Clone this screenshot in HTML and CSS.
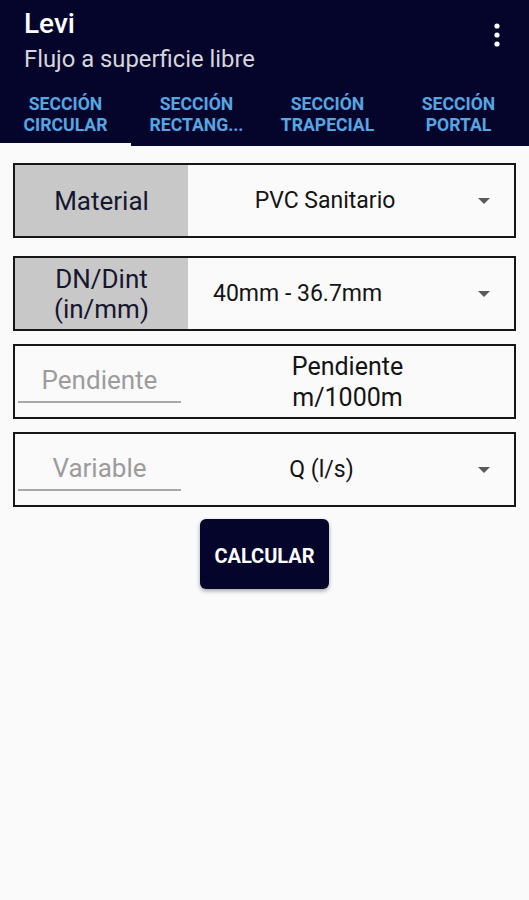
FILE: index.html
```html
<!DOCTYPE html>
<html lang="es">
<head>
  <meta charset="UTF-8" />
  <meta name="viewport" content="width=device-width, initial-scale=1.0"/>
  <title>Levi - Flujo a superficie libre</title>
  <link rel="stylesheet" href="styles.css">
</head>
<body>

  <header class="appbar">
    <div class="toolbar">
      <div class="titles">
        <h1>Levi</h1>
        <p>Flujo a superficie libre</p>
      </div>
      <div class="menu">
        <svg width="10" height="28" viewBox="0 0 10 28">
          <circle cx="5" cy="4" r="2.6" fill="#fff"/>
          <circle cx="5" cy="13" r="2.6" fill="#fff"/>
          <circle cx="5" cy="22" r="2.6" fill="#fff"/>
        </svg>
      </div>
    </div>
    <nav class="tabs">
      <a class="tab active">SECCIÓN<br>CIRCULAR</a>
      <a class="tab">SECCIÓN<br>RECTANG...</a>
      <a class="tab">SECCIÓN<br>TRAPECIAL</a>
      <a class="tab">SECCIÓN<br>PORTAL</a>
    </nav>
  </header>

  <div class="main">
    <div class="row first">
      <div class="label">Material</div>
      <div class="spinner">
        <span class="value">PVC Sanitario</span>
        <span class="arrow"></span>
      </div>
    </div>

    <div class="row second">
      <div class="label">DN/Dint<br>(in/mm)</div>
      <div class="spinner left">
        <span class="value">40mm - 36.7mm</span>
        <span class="arrow"></span>
      </div>
    </div>

    <div class="row">
      <div class="field"><span>Pendiente</span></div>
      <div class="unit">Pendiente<br>m/1000m</div>
    </div>

    <div class="row">
      <div class="field"><span>Variable</span></div>
      <div class="spinner">
        <span class="value">Q (l/s)</span>
        <span class="arrow"></span>
      </div>
    </div>

    <button class="calc">CALCULAR</button>
  </div>

</body>
</html>
```

FILE: styles.css
```css
* {
  margin: 0;
  padding: 0;
  box-sizing: border-box;
  font-family: Roboto, "Liberation Sans", sans-serif;
}

body {
  background: #fafafa;
  min-height: 100vh;
}

.appbar {
  background: #05052c;
  color: white;
}

.toolbar {
  height: 86px;
  display: flex;
  justify-content: space-between;
  padding: 8px 0 0 24px;
}

.titles h1 {
  font-size: 28px;
  font-weight: 500;
  line-height: 32px;
}

.titles p {
  font-size: 23.8px;
  line-height: 30px;
  margin-top: 4px;
  color: #d6d6dc;
}

.menu {
  padding: 14px 27px 0 0;
}

.tabs {
  display: flex;
  height: 60px;
  width: 524px;
  padding-bottom: 3px;
}

.tab {
  flex: 1;
  display: flex;
  align-items: center;
  justify-content: center;
  text-align: center;
  font-size: 17.6px;
  font-weight: 700;
  line-height: 21px;
  color: #56a6e2;
  position: relative;
}

.tab.active::after {
  content: "";
  position: absolute;
  left: 0;
  right: 0;
  bottom: -3px;
  height: 3px;
  background: #fafafa;
}

.main {
  display: flex;
  flex-direction: column;
  padding: 17px 13px 0;
}

.row {
  height: 75px;
  border: 2px solid #161616;
  display: flex;
  margin-bottom: 13px;
  background: #fafafa;
}

.row.first {
  margin-bottom: 18px;
}

.label {
  width: 173px;
  background: #c8c8c8;
  display: flex;
  align-items: center;
  justify-content: center;
  text-align: center;
  font-size: 26px;
  line-height: 30px;
  color: #16162e;
}

.spinner {
  flex: 1;
  display: flex;
  align-items: center;
  padding-right: 24px;
  font-size: 23px;
  color: #141414;
}

.spinner .value {
  flex: 1;
  text-align: center;
}

.spinner.left .value {
  text-align: left;
  padding-left: 25px;
}

.arrow {
  width: 0;
  height: 0;
  border-left: 6px solid transparent;
  border-right: 6px solid transparent;
  border-top: 6px solid #5a5a5a;
  margin-left: 16px;
}

.field {
  width: 163px;
  margin-left: 3px;
  display: flex;
  align-items: flex-end;
  padding-bottom: 14px;
}

.field span {
  width: 100%;
  border-bottom: 2px solid #a8a8a8;
  text-align: center;
  font-size: 26px;
  line-height: 38px;
  padding-bottom: 2px;
  color: #9c9c9c;
}

.unit {
  flex: 1;
  display: flex;
  align-items: center;
  justify-content: center;
  text-align: center;
  font-size: 25px;
  line-height: 31px;
  color: #141414;
}

.calc {
  align-self: center;
  margin-top: -1px;
  width: 129px;
  height: 70px;
  border: none;
  border-radius: 6px;
  background: #05052c;
  color: white;
  font-size: 20px;
  font-weight: 700;
  padding-top: 3px;
  box-shadow: 0 2px 4px rgba(0, 0, 0, 0.35);
}
```
